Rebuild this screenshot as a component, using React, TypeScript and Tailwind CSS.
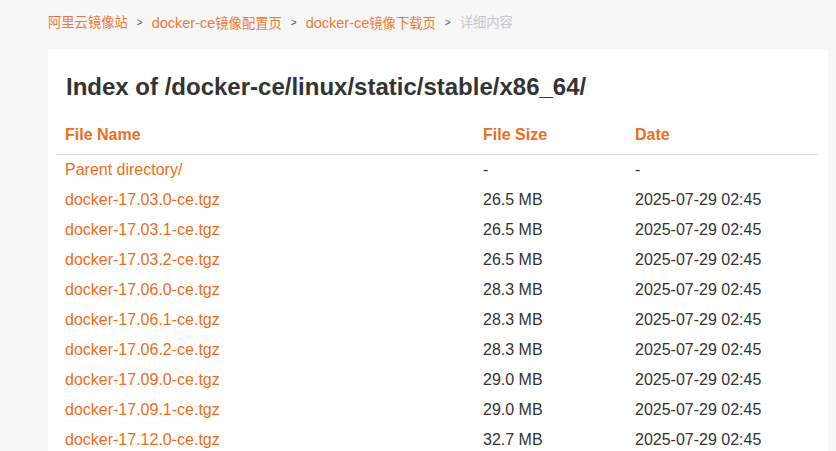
import React from "react";

const rows: [string, string, string][] = [
  ["Parent directory/", "-", "-"],
  ["docker-17.03.0-ce.tgz", "26.5 MB", "2025-07-29 02:45"],
  ["docker-17.03.1-ce.tgz", "26.5 MB", "2025-07-29 02:45"],
  ["docker-17.03.2-ce.tgz", "26.5 MB", "2025-07-29 02:45"],
  ["docker-17.06.0-ce.tgz", "28.3 MB", "2025-07-29 02:45"],
  ["docker-17.06.1-ce.tgz", "28.3 MB", "2025-07-29 02:45"],
  ["docker-17.06.2-ce.tgz", "28.3 MB", "2025-07-29 02:45"],
  ["docker-17.09.0-ce.tgz", "29.0 MB", "2025-07-29 02:45"],
  ["docker-17.09.1-ce.tgz", "29.0 MB", "2025-07-29 02:45"],
  ["docker-17.12.0-ce.tgz", "32.7 MB", "2025-07-29 02:45"],
];

function Sep() {
  return <span className="mx-[9px] text-[10px] text-[#555]">&gt;</span>;
}

export default function App() {
  return (
    <div className="min-h-screen bg-[#f7f7f7] font-['Liberation_Sans','Noto_Sans_CJK_SC',sans-serif]">
      <div className="px-[48px]">
        <div className="flex h-[45px] items-center pt-[1px] text-[13.3px] leading-none">
          <span className="text-[#f0793a]">阿里云镜像站</span>
          <Sep />
          <span className="text-[#f0793a]">
            <span className="text-[14.5px]">docker-ce</span>镜像配置页
          </span>
          <Sep />
          <span className="text-[#f0793a]">
            <span className="text-[14.5px]">docker-ce</span>镜像下载页
          </span>
          <Sep />
          <span className="text-[#c3c7cd]">详细内容</span>
        </div>
        <div className="mt-[4px] w-[780px] bg-white px-[8px] pb-[20px]">
          <h1 className="pl-[10px] pt-[24px] text-[24px] font-bold leading-[28px] text-[#333]">
            Index of /docker-ce/linux/static/stable/x86_64/
          </h1>
          <div className="mt-[12px] w-[762px] text-[16px]">
            <div className="grid h-[42px] grid-cols-[418px_152px_192px] items-center border-b border-[#dddddd] pt-[2px] font-bold text-[#ec6d1c]">
              <div className="pl-[9px]">File Name</div>
              <div className="pl-[9px]">File Size</div>
              <div className="pl-[9px]">Date</div>
            </div>
            {rows.map((r) => (
              <div key={r[0]} className="grid h-[30px] grid-cols-[418px_152px_192px] items-center">
                <div className="pl-[9px] text-[#ec6d1c]">{r[0]}</div>
                <div className="pl-[9px] text-[#333]">{r[1]}</div>
                <div className="pl-[9px] text-[#333]">{r[2]}</div>
              </div>
            ))}
          </div>
        </div>
      </div>
    </div>
  );
}
